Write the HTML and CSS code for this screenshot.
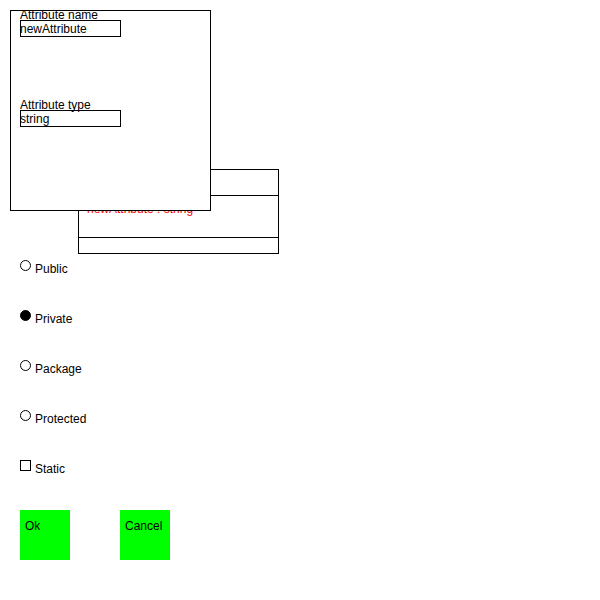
FILE: index.html
```html
<!DOCTYPE html>
<html>
<head>
<meta charset="utf-8">
<title>Attribute</title>
<link rel="stylesheet" href="styles.css">
</head>
<body>
<div class="stage">
  <div class="class-node">
    <div class="compartment name-part"></div>
    <div class="compartment attr-part"><span class="attr">newAttribute : string</span></div>
    <div class="compartment op-part"></div>
  </div>
  <div class="dialog">
    <div class="field">
      <div class="label">Attribute name</div>
      <div class="input">newAttribute</div>
    </div>
    <div class="field">
      <div class="label">Attribute type</div>
      <div class="input">string</div>
    </div>
  </div>
</div>
<div class="options">
  <div class="option"><span class="radio"></span><span class="text">Public</span></div>
  <div class="option"><span class="radio checked"></span><span class="text">Private</span></div>
  <div class="option"><span class="radio"></span><span class="text">Package</span></div>
  <div class="option"><span class="radio"></span><span class="text">Protected</span></div>
  <div class="option"><span class="checkbox"></span><span class="text">Static</span></div>
</div>
<div class="buttons">
  <div class="button">Ok</div>
  <div class="button">Cancel</div>
</div>
</body>
</html>
```
FILE: styles.css
```css
* { box-sizing: border-box; }
html, body { margin: 0; padding: 0; background: #fff; }
body {
  font-family: "Liberation Sans", Arial, sans-serif;
  font-size: 12px;
  color: #000;
}
.stage {
  position: relative;
  height: 260px;
  padding: 10px 0 0 10px;
}
.class-node {
  position: absolute;
  left: 78px;
  top: 169px;
  width: 201px;
  height: 85px;
  border: 1px solid #000;
  display: flex;
  flex-direction: column;
}
.compartment { border-bottom: 1px solid #000; }
.name-part { height: 26px; }
.attr-part { height: 42px; padding: 6px 0 0 8px; line-height: 15px; }
.op-part { flex: 1; border-bottom: none; }
.attr { color: #ff0000; }
.dialog {
  position: relative;
  z-index: 1;
  width: 201px;
  height: 201px;
  border: 1px solid #000;
  background: #fff;
  padding: 0 0 0 9px;
  display: flex;
  flex-direction: column;
  gap: 64px;
}
.field { display: flex; flex-direction: column; }
.label { height: 9px; line-height: 8px; white-space: nowrap; }
.input {
  width: 101px;
  height: 17px;
  border: 1px solid #000;
  padding-top: 1px;
  line-height: 15px;
  text-indent: -1px;
  white-space: nowrap;
}
.options {
  display: flex;
  flex-direction: column;
  padding-left: 20px;
}
.option {
  height: 50px;
  display: flex;
  align-items: flex-start;
  gap: 4px;
}
.radio, .checkbox {
  width: 11px;
  height: 11px;
  border: 1px solid #000;
  flex: none;
}
.radio { border-radius: 50%; }
.radio.checked { background: #000; }
.text { margin-top: 2px; line-height: 15px; }
.buttons {
  display: flex;
  gap: 50px;
  padding-left: 20px;
}
.button {
  width: 50px;
  height: 50px;
  background: #00ff00;
  padding: 9px 0 0 5px;
  line-height: 15px;
}
```
